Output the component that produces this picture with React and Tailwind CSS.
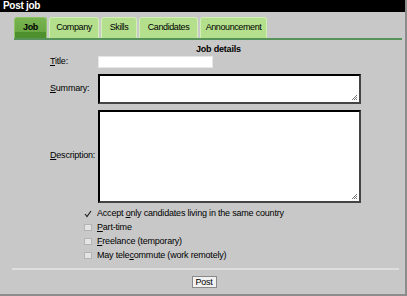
import React from 'react'

const tabs = [
  { label: 'Job', w: 'w-[33px]', active: true },
  { label: 'Company', w: 'w-[50px]' },
  { label: 'Skills', w: 'w-[36px]' },
  { label: 'Candidates', w: 'w-[59px]' },
  { label: 'Announcement', w: 'w-[67px]' },
]

const options = [
  { pre: 'Accept ', key: 'o', post: 'nly candidates living in the same country', checked: true },
  { pre: '', key: 'P', post: 'art-time' },
  { pre: '', key: 'F', post: 'reelance (temporary)' },
  { pre: 'May tele', key: 'c', post: 'ommute (work remotely)' },
]

const Grip = () => (
  <svg className="absolute right-[1px] bottom-[1px]" width="7" height="7" viewBox="0 0 7 7">
    <path d="M6 1L1 6M6 3L3 6M6 5L5 6" stroke="#777" strokeWidth="1" />
  </svg>
)

const Label = ({ k, rest }) => (
  <span>
    <span className="underline">{k}</span>
    {rest}
  </span>
)

const App = () => {
  return (
    <div className="w-[407px] h-[296px] bg-[#c8c8c8] border-r-2 border-b-2 border-[#8c8c8c] flex flex-col font-['Liberation_Sans',Arial,sans-serif] text-[9px] tracking-[-0.2px] text-black">
      {/* Title bar */}
      <div className="h-[12px] bg-black text-white font-bold text-[10px] leading-[12px] pl-[3px] tracking-[-0.3px]">
        Post job
      </div>

      {/* Tabs */}
      <div className="mt-[5px] ml-[14px] mr-[3px] flex gap-[2px] border-b-2 border-[#55935a] tracking-[-0.4px]">
        {tabs.map((t) => (
          <div
            key={t.label}
            className={
              t.active
                ? `${t.w} h-[21px] rounded-t-[3px] border-t border-x border-[#8cc466] bg-[linear-gradient(#78b450_0,#6aa843_70%,#4e8f2e_70%)] flex items-center justify-center font-bold`
                : `${t.w} h-[21px] rounded-t-[3px] border-t border-x border-[#d2efb4] bg-[#b4df8c] flex items-center justify-center`
            }
          >
            {t.label}
          </div>
        ))}
      </div>

      {/* Form */}
      <div className="flex flex-col">
        <div className="mt-[4px] h-[10px] leading-[10px] pl-[196px] font-bold">Job details</div>

        <div className="mt-[1px] pl-[50px] grid grid-cols-[48px_263px] items-center">
          <Label k="T" rest="itle:" />
          <div className="w-[115px] h-[12px] bg-white border border-[#e6e6e6]" />

          <div className="mt-[5px]">
            <Label k="S" rest="ummary:" />
          </div>
          <div className="relative mt-[5px] h-[30px] bg-white border-2 border-black border-r-[#444] border-b-[#444]">
            <Grip />
          </div>

          <div className="mt-[6px]">
            <Label k="D" rest="escription:" />
          </div>
          <div className="relative mt-[6px] h-[93px] bg-white border-2 border-black border-r-[#444] border-b-[#444]">
            <Grip />
          </div>
        </div>

        <div className="mt-[4px] pl-[84px] flex flex-col">
          {options.map((o) => (
            <div key={o.post} className="h-[14px] flex items-center gap-[5px]">
              {o.checked ? (
                <span className="w-[8px] h-[8px] flex items-center justify-center">
                  <svg width="8" height="8" viewBox="0 0 8 8">
                    <path d="M1 4L3 6.5L7 1" stroke="#222" strokeWidth="1.2" fill="none" />
                  </svg>
                </span>
              ) : (
                <span className="w-[8px] h-[7px] bg-[#e4e4e4] border border-[#b4b4b4]" />
              )}
              <span>
                {o.pre}
                <span className="underline">{o.key}</span>
                {o.post}
              </span>
            </div>
          ))}
        </div>

        <div className="mt-[5px] mr-[6px] ml-[12px] h-[2px] bg-[#dedede]" />

        <div className="mt-[6px] flex justify-center pl-[3px]">
          <button className="w-[25px] h-[12px] leading-[10px] bg-[#f2f2f2] border border-[#8a8a8a] text-[9px]">
            Post
          </button>
        </div>
      </div>
    </div>
  )
}

export default App
